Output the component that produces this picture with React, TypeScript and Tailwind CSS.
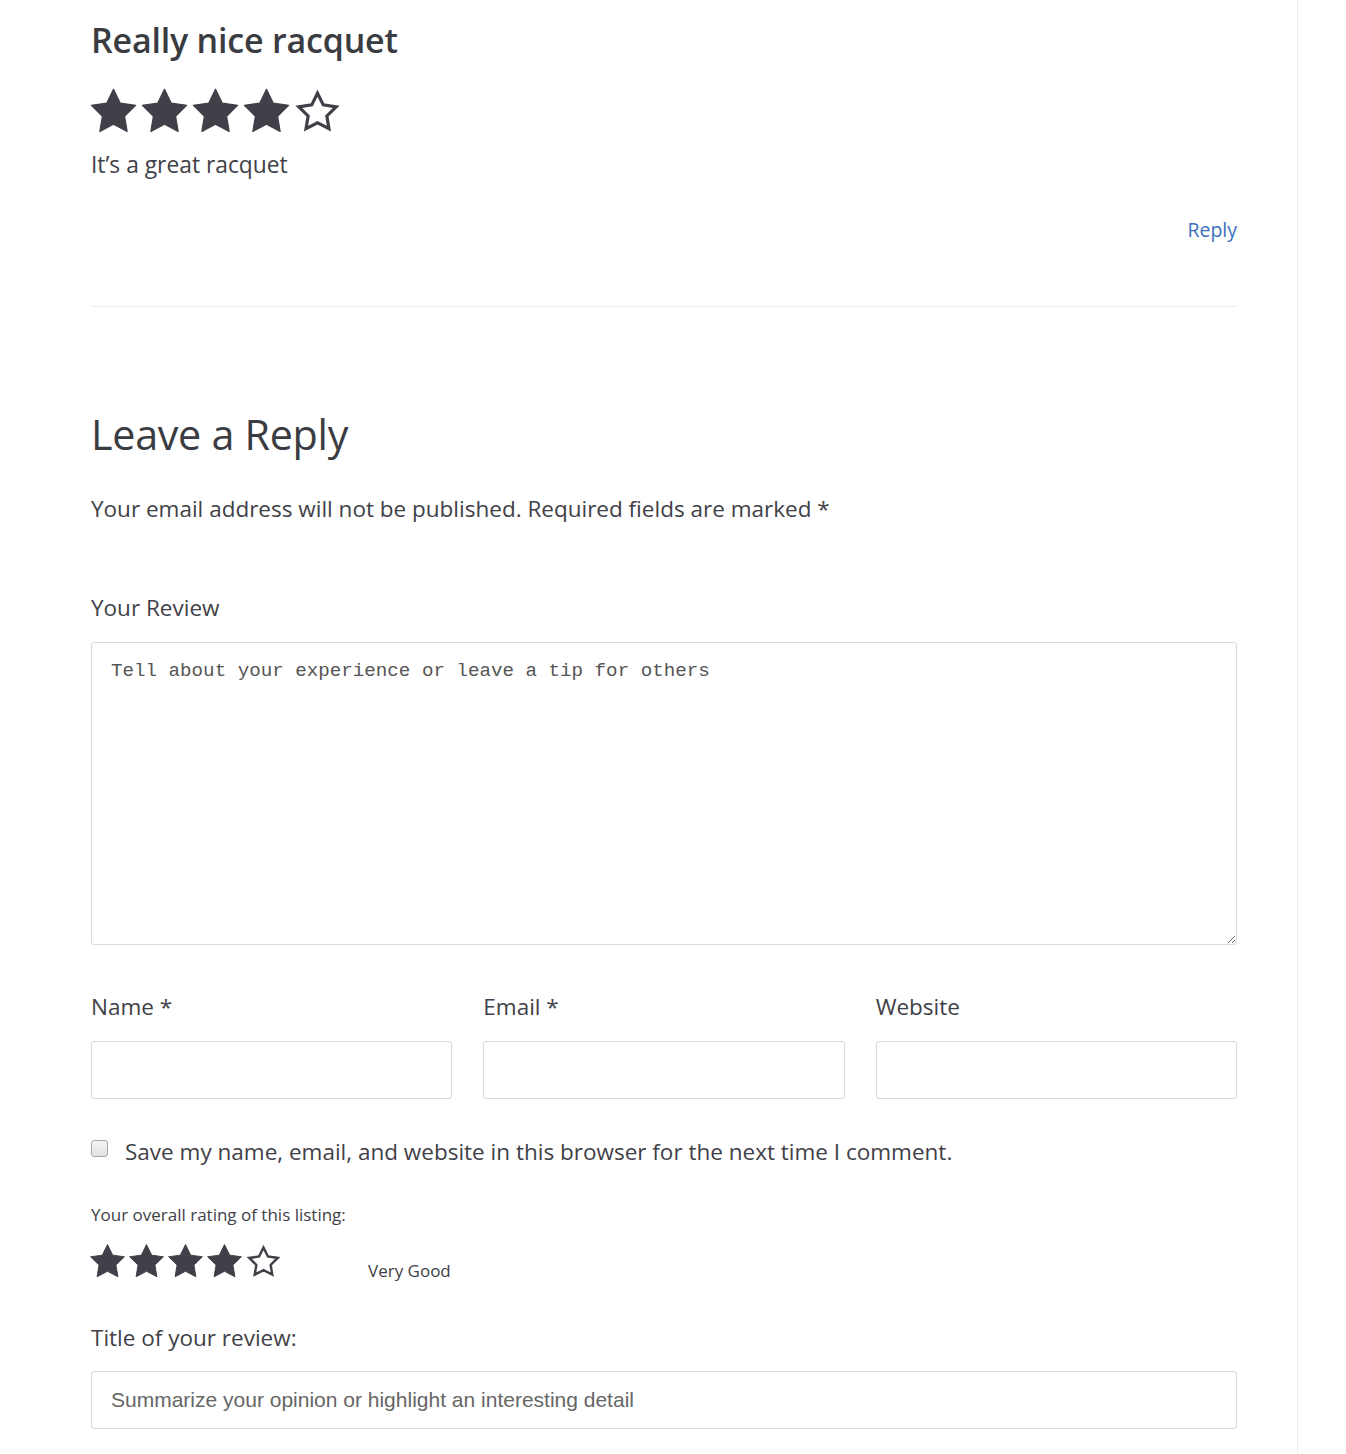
const STAR =
  "12,1.6 15.2,8.1 22.4,9.1 17.2,14.2 18.4,21.4 12,18 5.6,21.4 6.8,14.2 1.6,9.1 8.8,8.1";

function Star({ filled, size }: { filled: boolean; size: number }) {
  return (
    <svg width={size} height={size} viewBox="0 0 24 24" className="shrink-0">
      {filled ? (
        <polygon points={STAR} fill="#3f4048" stroke="#3f4048" strokeWidth="0.6" strokeLinejoin="round" />
      ) : (
        <polygon
          points="12,3.4 14.7,8.9 20.8,9.8 16.4,14.1 17.4,20.1 12,17.3 6.6,20.1 7.6,14.1 3.2,9.8 9.3,8.9"
          fill="none"
          stroke="#3f4048"
          strokeWidth="1.5"
          strokeLinejoin="miter"
        />
      )}
    </svg>
  );
}

function Stars({ count, size }: { count: number; size: number }) {
  return (
    <div className="-ml-[3px] flex">
      {[1, 2, 3, 4, 5].map((i) => (
        <Star key={i} filled={i <= count} size={size} />
      ))}
    </div>
  );
}

export default function App() {
  const sans = "font-['Open_Sans','Noto_Sans',sans-serif]";
  return (
    <div className={`min-h-[1454px] bg-white text-[#3f4147] ${sans}`}>
      <div className="w-[1298px] min-h-[1454px] border-r border-[#ececec]">
        <div className="pl-[91px] pr-[60px]">
          {/* existing review */}
          <h3 className="pt-[18px] text-[34px] font-semibold leading-[44px] tracking-[-0.2px] text-[#3a3c42]">
            Really nice racquet
          </h3>
          <div className="mt-[24px]">
            <Stars count={4} size={51} />
          </div>
          <p className="mt-[13px] text-[22.8px] leading-[30px]">It’s a great racquet</p>
          <div className="mt-[35px] flex justify-end">
            <a href="#" className="text-[19.5px] leading-[30px] text-[#3b6fbd]">
              Reply
            </a>
          </div>
          <hr className="mt-[61px] border-0 border-t border-[#ececec]" />

          {/* reply form */}
          <h2 className="mt-[99px] text-[41.3px] font-medium leading-[56px] tracking-[-0.3px] text-[#3a3c42]">
            Leave a Reply
          </h2>
          <p className="mt-[32px] text-[22.5px] leading-[30px]">
            Your email address will not be published. Required fields are marked *
          </p>

          <label className="mt-[69px] block text-[22.5px] leading-[30px]">Your Review</label>
          <textarea
            className="mt-[19px] block h-[303px] w-full resize-y rounded-[3px] border border-[#d9d9d9] px-[19px] py-[15px] font-['Liberation_Mono',monospace] text-[19.2px] leading-[26px] text-[#3f4147] placeholder:text-[#555] outline-none"
            placeholder="Tell about your experience or leave a tip for others"
          />

          <div className="mt-[47px] grid grid-cols-3 gap-[31px]">
            {["Name *", "Email *", "Website"].map((l) => (
              <div key={l}>
                <label className="block text-[22.5px] leading-[30px]">{l}</label>
                <input className="mt-[19px] block h-[58px] w-full rounded-[3px] border border-[#d9d9d9] outline-none" />
              </div>
            ))}
          </div>

          <div className="mt-[38px] flex items-center">
            <input
              type="checkbox"
              className="m-0 mb-[8px] h-[17px] w-[17px] shrink-0 appearance-none rounded-[3px] border border-[#a9a9a9] bg-[linear-gradient(#f4f4f4,#e2e2e2)]"
            />
            <span className="ml-[17px] text-[22.5px] leading-[30px]">
              Save my name, email, and website in this browser for the next time I comment.
            </span>
          </div>

          <p className="mt-[36px] text-[17px] leading-[24px]">Your overall rating of this listing:</p>
          <div className="mt-[12px] flex items-center">
            <Stars count={4} size={39} />
            <span className="ml-[85px] mt-[20px] text-[17px] leading-[24px]">Very Good</span>
          </div>

          <p className="mt-[40px] text-[22.5px] leading-[30px]">Title of your review:</p>
          <input
            className="mt-[18px] block h-[58px] w-full rounded-[3px] border border-[#d9d9d9] px-[19px] font-['Liberation_Sans',Arial,sans-serif] text-[21px] placeholder:text-[#666] outline-none"
            placeholder="Summarize your opinion or highlight an interesting detail"
          />
        </div>
      </div>
    </div>
  );
}
